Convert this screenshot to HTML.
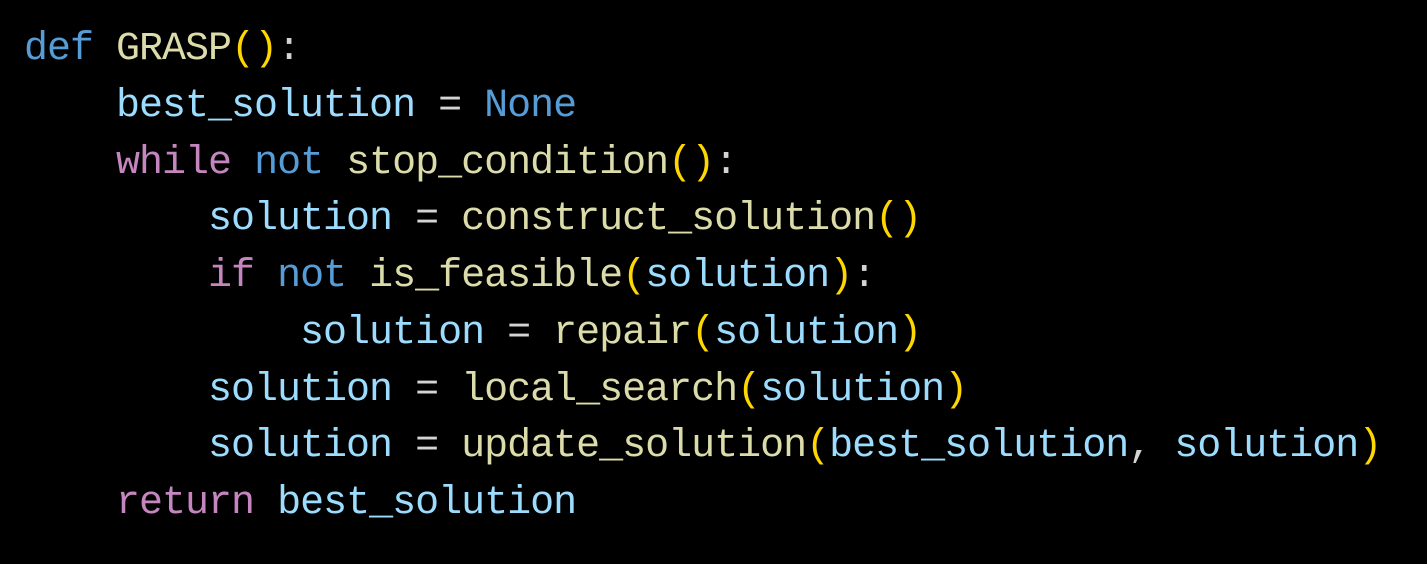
<!DOCTYPE html>
<html><head><meta charset="utf-8"><style>
html,body{margin:0;padding:0;background:#000;width:1427px;height:564px;overflow:hidden}
pre{margin:0;position:absolute;left:24px;top:22px;font-family:"Liberation Mono",monospace;font-size:40px;letter-spacing:-1px;line-height:56.75px;color:#d4d4d4;white-space:pre}
.k{color:#569cd6}.f{color:#dcdcaa}.v{color:#9cdcfe}.c{color:#c586c0}.b{color:#ffd700}
</style></head><body><pre><span class="k">def</span> <span class="f">GRASP</span><span class="b">()</span>:
    <span class="v">best_solution</span> = <span class="k">None</span>
    <span class="c">while</span> <span class="k">not</span> <span class="f">stop_condition</span><span class="b">()</span>:
        <span class="v">solution</span> = <span class="f">construct_solution</span><span class="b">()</span>
        <span class="c">if</span> <span class="k">not</span> <span class="f">is_feasible</span><span class="b">(</span><span class="v">solution</span><span class="b">)</span>:
            <span class="v">solution</span> = <span class="f">repair</span><span class="b">(</span><span class="v">solution</span><span class="b">)</span>
        <span class="v">solution</span> = <span class="f">local_search</span><span class="b">(</span><span class="v">solution</span><span class="b">)</span>
        <span class="v">solution</span> = <span class="f">update_solution</span><span class="b">(</span><span class="v">best_solution</span>, <span class="v">solution</span><span class="b">)</span>
    <span class="c">return</span> <span class="v">best_solution</span></pre></body></html>
